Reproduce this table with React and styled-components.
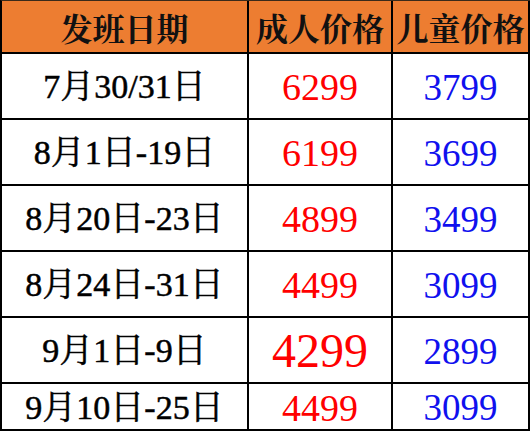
import React from "react";
import styled, { createGlobalStyle } from "styled-components";

const Global = createGlobalStyle`
  html, body { margin: 0; padding: 0; background: #ffffff; }
  body { width: 530px; height: 431px; overflow: hidden; }
`;

const HEAD_FONT = `"Noto Serif CJK SC", "Noto Sans CJK SC", serif`;
const DATE_FONT = `"Liberation Serif", "Noto Serif CJK SC", "Noto Sans CJK SC", serif`;
const NUM_FONT = `"Liberation Serif", "Times New Roman", serif`;

const Table = styled.div`
  display: grid;
  grid-template-columns: 247px 144px 137px;
  grid-template-rows: 53px repeat(5, 66px) 47px;
  width: 530px;
  box-sizing: border-box;
  border-left: 2px solid #000;
  border-top: 1px solid #3a2a1a;
  background: #fff;
`;

const Cell = styled.div`
  box-sizing: border-box;
  border-right: 2px solid #000;
  border-bottom: 2px solid #000;
  display: flex;
  align-items: center;
  justify-content: center;
  white-space: nowrap;
  overflow: hidden;
`;

const Text = styled.span`
  display: block;
  line-height: 1;
  white-space: nowrap;
  font-family: ${(p) => p.$font};
  font-size: ${(p) => p.$size}px;
  font-weight: ${(p) => p.$weight || 400};
  color: ${(p) => p.$color || "#000"};
  ${(p) => (p.$stroke ? `-webkit-text-stroke: ${p.$stroke}px ${p.$color || "#000"};` : "")}
`;

const HeadCell = styled(Cell)`
  background: #ed7d31;
  padding-top: 1px;
`;

const BodyCell = styled(Cell)`
  padding-top: 2px;
`;

const rows = [
  { date: "7月30/31日", adult: "6299", child: "3799" },
  { date: "8月1日-19日", adult: "6199", child: "3699" },
  { date: "8月20日-23日", adult: "4899", child: "3499" },
  { date: "8月24日-31日", adult: "4499", child: "3099" },
  { date: "9月1日-9日", adult: "4299", child: "2899", big: true },
  { date: "9月10日-25日", adult: "4499", child: "3099" },
];

const headers = ["发班日期", "成人价格", "儿童价格"];

export default function App() {
  return (
    <>
      <Global />
      <Table>
        {headers.map((h) => (
          <HeadCell key={h}>
            <Text $font={HEAD_FONT} $size={32} $weight={700} $color="#111">
              {h}
            </Text>
          </HeadCell>
        ))}
        {rows.map((r, i) => (
          <React.Fragment key={i}>
            <BodyCell>
              <Text $font={DATE_FONT} $size={34} $stroke={0.5}>
                {r.date}
              </Text>
            </BodyCell>
            <BodyCell>
              <Text $font={NUM_FONT} $size={r.big ? 48 : 38} $color="#ff0000">
                {r.adult}
              </Text>
            </BodyCell>
            <BodyCell>
              <Text $font={NUM_FONT} $size={37} $color="#1010ee">
                {r.child}
              </Text>
            </BodyCell>
          </React.Fragment>
        ))}
      </Table>
    </>
  );
}
